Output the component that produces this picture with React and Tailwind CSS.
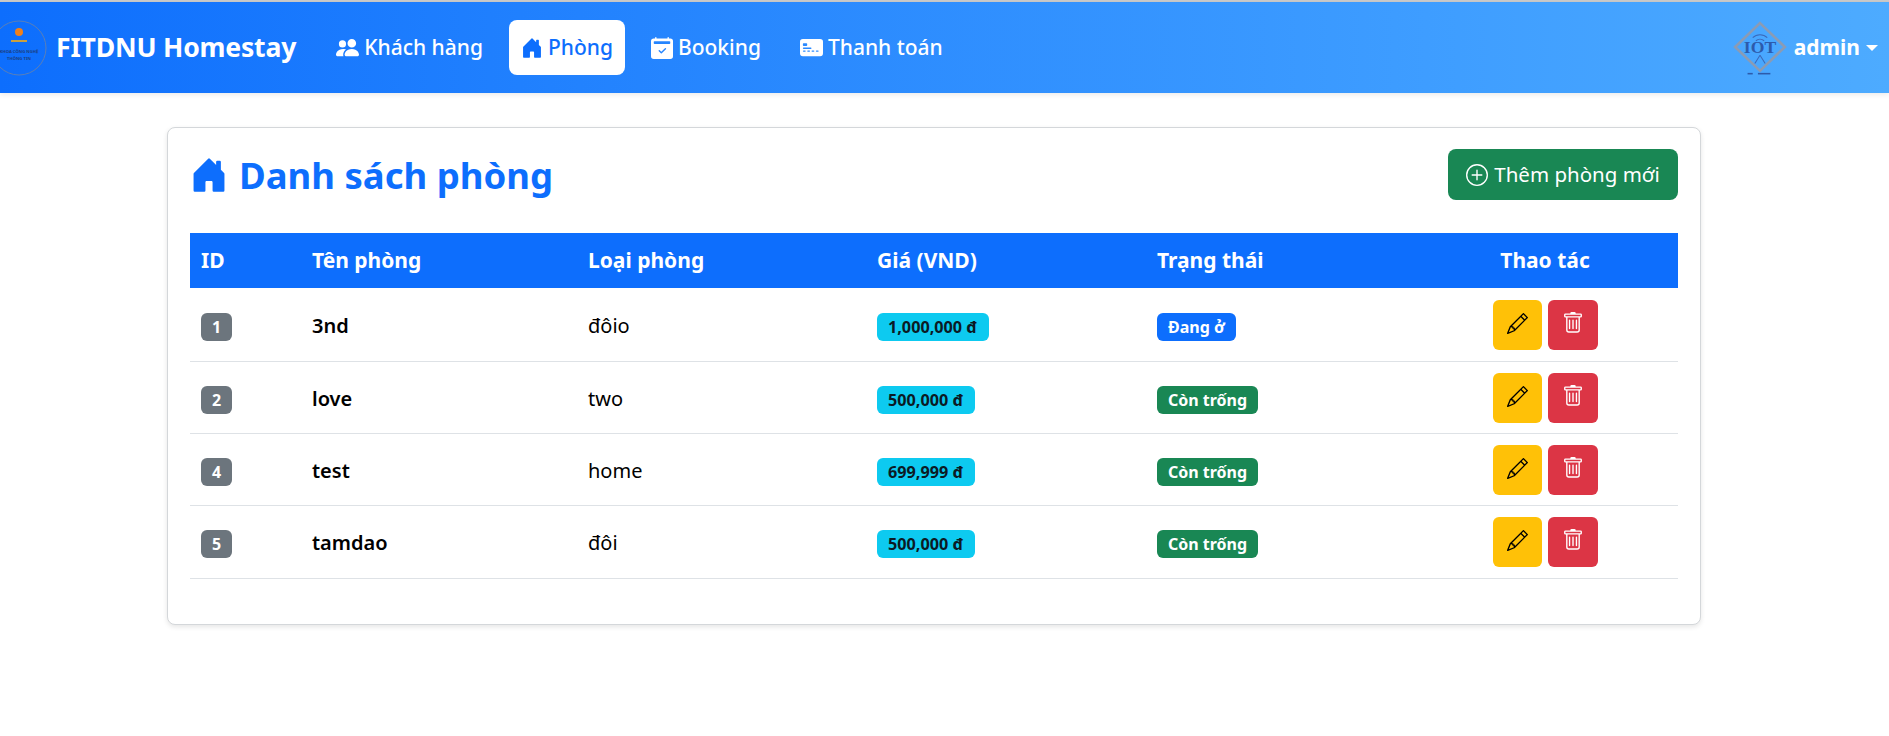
import React from "react";
import { BsHouseDoorFill, BsPeopleFill, BsCalendar2CheckFill, BsCreditCard2FrontFill, BsPlusCircle, BsPencil, BsTrash } from "react-icons/bs";

const rows = [
  { id: 1, name: "3nd", type: "đôio", price: "1,000,000 đ", status: "Đang ở", busy: true, h: "h-[73.5px]" },
  { id: 2, name: "love", type: "two", price: "500,000 đ", status: "Còn trống", h: "h-[72px]" },
  { id: 4, name: "test", type: "home", price: "699,999 đ", status: "Còn trống", h: "h-[72px]" },
  { id: 5, name: "tamdao", type: "đôi", price: "500,000 đ", status: "Còn trống", h: "h-[72.5px]" },
];

function LeftLogo() {
  return (
    <svg width="58" height="58" viewBox="0 0 58 58" className="shrink-0">
      <circle cx="29" cy="29" r="27" fill="none" stroke="#5a7fb8" strokeWidth="1" />
      <circle cx="29" cy="13" r="4" fill="#f0801a" />
      <rect x="21" y="21" width="16" height="2" fill="#c9a040" />
      <text x="29" y="34" textAnchor="middle" fontSize="4.2" fontWeight="700" fill="#1d3f80" fontFamily="Noto Sans">KHOA CÔNG NGHỆ</text>
      <text x="29" y="41" textAnchor="middle" fontSize="4.2" fontWeight="700" fill="#1d3f80" fontFamily="Noto Sans">THÔNG TIN</text>
    </svg>
  );
}

function RightLogo() {
  return (
    <svg width="54" height="56" viewBox="0 0 52 54" className="shrink-0">
      <path d="M26 3 L50 26 L26 49 L2 26 Z" fill="none" stroke="#8b9bb4" strokeWidth="2.5" />
      <path d="M19 17 a10 10 0 0 1 14 0 M22 20 a6 6 0 0 1 8 0" fill="none" stroke="#3c68b8" strokeWidth="1" />
      <text x="26" y="32" textAnchor="middle" fontSize="17" fontWeight="700" fill="#2d5bab" fontFamily="Liberation Serif">IOT</text>
      <path d="M26 34 L21 42 M26 34 L31 42" stroke="#3c68b8" strokeWidth="1" />
      <rect x="14" y="51" width="5" height="1.5" fill="#2d5bab" />
      <rect x="24" y="51" width="12" height="1.5" fill="#2d5bab" />
    </svg>
  );
}

function NavItem({ icon, label, active }) {
  return (
    <a className={`flex h-[55px] items-center gap-[5px] rounded-[8px] px-[12px] text-[21px] font-medium ${active ? "bg-white text-[#0d6efd]" : "text-white"}`}>
      {icon}
      <span className="pt-[1px]">{label}</span>
    </a>
  );
}

export default function App() {
  return (
    <div className="min-h-[736px] bg-white text-[20px] text-black" style={{ fontFamily: '"Noto Sans", "Open Sans", sans-serif' }}>
      <div className="h-[2px] bg-[#c9c9c9]" />
      <nav className="flex h-[91px] items-center bg-gradient-to-r from-[#0d6efd] to-[#4dabff] shadow-[0_2px_5px_rgba(0,0,0,0.08)]">
        <div className="-ml-[10px] flex items-center gap-[8px]">
          <LeftLogo />
          <span className="pt-[1px] text-[26.6px] font-bold tracking-[-0.2px] text-white">FITDNU Homestay</span>
        </div>
        <div className="ml-[28px] flex items-center gap-[3px]">
          <NavItem icon={<BsPeopleFill size={23} />} label="Khách hàng" />
          <div className="ml-[11px]">
            <NavItem active icon={<BsHouseDoorFill size={22} />} label="Phòng" />
          </div>
          <div className="ml-[11px]">
            <NavItem icon={<BsCalendar2CheckFill size={22} />} label="Booking" />
          </div>
          <div className="ml-[12px]">
            <NavItem icon={<BsCreditCard2FrontFill size={23} />} label="Thanh toán" />
          </div>
        </div>
        <div className="ml-auto mr-[11px] flex items-center gap-[7px]">
          <RightLogo />
          <span className="pt-[1px] text-[21px] font-bold text-white">admin</span>
          <span className="-ml-[1px] h-0 w-0 border-x-[6px] border-t-[6px] border-x-transparent border-t-white" />
        </div>
      </nav>

      <main className="ml-[167px] mt-[34px] w-[1534px] rounded-[8px] border border-[#d4d7da] bg-white px-[22px] pb-[45px] pt-[21px] shadow-[0_2px_5px_rgba(0,0,0,0.1)]">
        <div className="flex h-[51px] items-center justify-between">
          <h2 className="flex items-center gap-[11px] text-[36.5px] font-bold text-[#0d6efd]">
            <BsHouseDoorFill size={38} />
            <span className="pt-[2px]">Danh sách phòng</span>
          </h2>
          <button className="flex h-[51px] w-[230px] items-center justify-center gap-[6px] rounded-[8px] bg-[#198754] text-[20.5px] text-white">
            <BsPlusCircle size={22} />
            Thêm phòng mới
          </button>
        </div>

        <table className="mt-[33px] w-[1488px] table-fixed border-collapse">
          <colgroup>
            <col className="w-[111px]" />
            <col className="w-[276px]" />
            <col className="w-[289px]" />
            <col className="w-[280px]" />
            <col className="w-[266px]" />
            <col className="w-[266px]" />
          </colgroup>
          <thead>
            <tr className="h-[55px] bg-[#0d6efd] text-left text-[21px] text-white">
              <th className="pl-[11px] font-bold">ID</th>
              <th className="pl-[11px] font-bold">Tên phòng</th>
              <th className="pl-[11px] font-bold">Loại phòng</th>
              <th className="pl-[11px] font-bold">Giá (VND)</th>
              <th className="pl-[11px] font-bold">Trạng thái</th>
              <th className="text-center font-bold">Thao tác</th>
            </tr>
          </thead>
          <tbody>
            {rows.map((r) => (
              <tr key={r.id} className={`${r.h} border-b border-[#dee2e6]`}>
                <td className="pl-[11px] pt-[3px]">
                  <span className="inline-flex h-[28px] w-[31px] items-center justify-center rounded-[6px] bg-[#6c757d] text-[16px] font-bold text-white">{r.id}</span>
                </td>
                <td className="pl-[11px] pt-[2px] font-semibold">{r.name}</td>
                <td className="pl-[11px] pt-[2px]">{r.type}</td>
                <td className="pl-[11px] pt-[3px]">
                  <span className="inline-flex h-[28px] items-center rounded-[6px] bg-[#0dcaf0] px-[11px] pr-[12px] text-[16.2px] font-bold text-[#0b1a24]">{r.price}</span>
                </td>
                <td className="pl-[11px] pt-[3px]">
                  <span className={`inline-flex h-[28px] items-center rounded-[6px] px-[11px] text-[16px] font-bold text-white ${r.busy ? "bg-[#0d6efd]" : "bg-[#198754]"}`}>{r.status}</span>
                </td>
                <td>
                  <div className="flex items-center justify-center gap-[6px]">
                    <button className="flex h-[50px] w-[49px] items-center justify-center rounded-[6px] bg-[#ffc107] text-black">
                      <BsPencil size={21} className="mb-[2px]" />
                    </button>
                    <button className="flex h-[50px] w-[50px] items-center justify-center rounded-[6px] bg-[#dc3545] text-white">
                      <BsTrash size={22} className="mb-[3px]" />
                    </button>
                  </div>
                </td>
              </tr>
            ))}
          </tbody>
        </table>
      </main>
    </div>
  );
}
